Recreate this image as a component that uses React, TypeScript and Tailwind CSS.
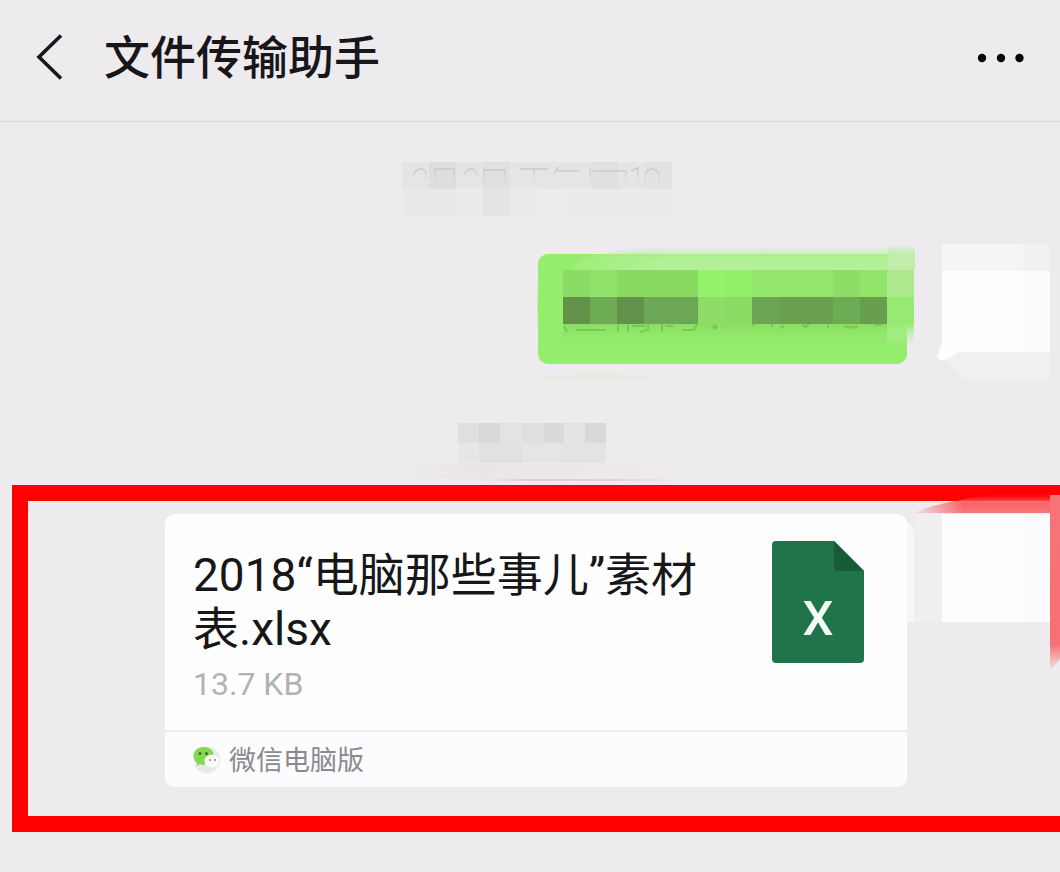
import type { ReactNode } from 'react'

type Block = [x: number, y: number, w: number, h: number, fill: string]

const DATE_BLOCKS: Block[] = [
  [0, 0, 270, 27, '#e5e4e6'],
  [27, 0, 27, 27, '#dedddf'],
  [81, 0, 27, 27, '#e0dfe1'],
  [189, 0, 27, 27, '#e0dfe1'],
  [243, 0, 27, 27, '#e2e1e3'],
  [0, 27, 54, 27, '#e9e8ea'],
  [54, 27, 27, 27, '#ebeaec'],
  [81, 27, 27, 27, '#e4e3e5'],
  [108, 27, 27, 27, '#eae9eb'],
  [162, 27, 108, 27, '#ebeaec'],
]

const TIME_BLOCKS: Block[] = [
  [58, 0, 21, 20, '#dfdfe1'],
  [79, 0, 21, 20, '#d9d9dc'],
  [100, 0, 22, 20, '#e3e3e5'],
  [122, 0, 22, 20, '#dfdfe1'],
  [144, 0, 20, 20, '#dadadd'],
  [164, 0, 21, 20, '#e4e4e6'],
  [185, 0, 21, 20, '#d9d9dc'],
  [58, 20, 21, 20, '#e6e6e8'],
  [79, 20, 43, 20, '#e1e1e3'],
  [122, 20, 42, 20, '#e5e5e7'],
  [164, 20, 42, 20, '#e3e3e5'],
]

const BUBBLE_BLOCKS: Block[] = [
  [39, 27, 27, 27, '#8bdc64'],
  [66, 27, 27, 27, '#8fe368'],
  [93, 27, 81, 27, '#89da61'],
  [174, 27, 27, 27, '#94f26b'],
  [201, 27, 27, 27, '#92ed69'],
  [228, 27, 81, 27, '#91e66b'],
  [309, 27, 27, 27, '#8cdf64'],
  [336, 27, 27, 27, '#90e569'],
  [363, 27, 27, 27, '#ade98c'],
  [39, 54, 27, 27, '#62914a'],
  [66, 54, 27, 27, '#6dab54'],
  [93, 54, 27, 27, '#61914a'],
  [120, 54, 54, 27, '#6ba755'],
  [174, 54, 27, 27, '#8ddd66'],
  [201, 54, 27, 27, '#8adb61'],
  [228, 54, 27, 27, '#6ba552'],
  [255, 54, 54, 27, '#68a04e'],
  [309, 54, 27, 27, '#6dab54'],
  [336, 54, 27, 27, '#689f4d'],
  [363, 54, 27, 27, '#96e972'],
]

function Blocks({ items }: { items: Block[] }) {
  return (
    <>
      {items.map(([x, y, w, h, fill]) => (
        <rect key={`${x}-${y}`} x={x} y={y} width={w} height={h} fill={fill} />
      ))}
    </>
  )
}

function BackIcon() {
  return (
    <svg width="28" height="48" viewBox="0 0 28 48" fill="none" stroke="#17161a" strokeWidth="3.6" aria-hidden="true">
      <path d="M25 1.500 3 23l22 21.500" />
    </svg>
  )
}

function MoreIcon() {
  return (
    <svg width="48" height="10" viewBox="0 0 48 10" fill="#050506" aria-hidden="true">
      <circle cx="6" cy="5" r="4.200" />
      <circle cx="25" cy="5" r="4.200" />
      <circle cx="43.500" cy="5" r="4.200" />
    </svg>
  )
}

function ExcelIcon() {
  return (
    <svg width="92" height="122" viewBox="0 0 92 122" className="shrink-0" role="img" aria-label="Excel">
      <path d="M4 0h58l30 30v88a4 4 0 0 1-4 4H4a4 4 0 0 1-4-4V4a4 4 0 0 1 4-4Z" fill="#20744a" />
      <path d="M62 0l30 30H66a4 4 0 0 1-4-4Z" fill="#185c37" />
      <text x="46" y="94" textAnchor="middle" fill="#f4fff8" className="font-['Roboto',sans-serif] text-[49px] font-medium">
        X
      </text>
    </svg>
  )
}

function WeChatIcon() {
  return (
    <svg width="28" height="28" viewBox="0 0 28 28" className="shrink-0" aria-hidden="true">
      <circle cx="14" cy="14" r="13.500" fill="#e9e9ea" />
      <path
        d="M10.500 1C4.500 1 .5 5 .5 10c0 3 1.500 5.500 3.800 7.200L3.500 20l3.600-1.700c1.600.5 3.600.7 5.400.3C12 12.500 16 9 21 9 20 4 16 1 10.500 1Z"
        fill="#84d94e"
      />
      <ellipse cx="19" cy="15" rx="7.500" ry="6.500" fill="#fafafa" />
      <path d="M21 20l3.500 2-.8-3.500Z" fill="#fafafa" />
      <circle cx="7" cy="7.500" r="1.500" fill="#35702a" />
      <circle cx="13.500" cy="7.500" r="1.500" fill="#35702a" />
      <circle cx="17" cy="14" r="1.100" fill="#8d938b" />
      <circle cx="22" cy="14" r="1.100" fill="#8d938b" />
    </svg>
  )
}

function HiddenDate() {
  return (
    <svg width="270" height="54" viewBox="0 0 270 54" role="img" aria-label="日期">
      <clipPath id="date-top">
        <rect width="270" height="26" />
      </clipPath>
      <linearGradient id="date-fade" x1="0" y1="5" x2="0" y2="20" gradientUnits="userSpaceOnUse">
        <stop offset="0" stopColor="#cccbce" />
        <stop offset="1" stopColor="#cccbce" stopOpacity=".1" />
      </linearGradient>
      <Blocks items={DATE_BLOCKS} />
      <g clipPath="url(#date-top)" stroke="url(#date-fade)" strokeWidth="2" fill="none">
        <path d="M11 14q2-7 8-7t5 10M33 24V7h19v17M62 14q2-7 7-7t6 6M82 24V8h21v16M118 7h28M132 7v14M156 5l-4 7M154 9h24M188 7v8M191 9h33v16M229 9l7-3v20M243 25v-9q0-9 7-9t7 9v9" />
      </g>
    </svg>
  )
}

function HiddenTime() {
  return (
    <svg width="280" height="58" viewBox="0 0 280 58" role="img" aria-label="时间">
      <defs>
        <linearGradient id="smear-x">
          <stop offset="0" stopColor="#ebe6e6" stopOpacity="0" />
          <stop offset=".25" stopColor="#ebe6e6" />
          <stop offset=".8" stopColor="#ece9ea" />
          <stop offset="1" stopColor="#ece9ea" stopOpacity="0" />
        </linearGradient>
        <linearGradient id="smear-pink">
          <stop offset="0" stopColor="#edc6ca" stopOpacity="0" />
          <stop offset=".25" stopColor="#edc6ca" />
          <stop offset=".7" stopColor="#edced5" />
          <stop offset="1" stopColor="#edced5" stopOpacity="0" />
        </linearGradient>
      </defs>
      <Blocks items={TIME_BLOCKS} />
      <rect x="8" y="41" width="254" height="15" fill="url(#smear-x)" />
      <rect x="78" y="56" width="200" height="2" fill="url(#smear-pink)" />
    </svg>
  )
}

// Message body is pixelated; drawing area is a little larger than the bubble itself.
function HiddenMessage() {
  return (
    <svg
      width="404"
      height="144"
      viewBox="0 0 404 144"
      className="absolute -top-[11px] -left-[14px]"
      role="img"
      aria-label="消息内容"
    >
      <defs>
        <linearGradient id="haze-top" x1="0" y1="0" x2="0" y2="1">
          <stop offset="0" stopColor="#b2f096" stopOpacity="0" />
          <stop offset=".5" stopColor="#b2f096" />
          <stop offset="1" stopColor="#b6ef9a" />
        </linearGradient>
        <linearGradient id="haze-left">
          <stop offset="0" stopColor="#fff" stopOpacity="0" />
          <stop offset=".35" stopColor="#fff" />
        </linearGradient>
        <linearGradient id="corner-fade" x1="0" y1="0" x2="0" y2="1">
          <stop offset="0" stopColor="#c3ecad" stopOpacity=".2" />
          <stop offset=".5" stopColor="#c3ecad" />
        </linearGradient>
        <linearGradient id="text-fade" x1="0" y1="0" x2="0" y2="1">
          <stop offset="0" stopColor="#82d45d" stopOpacity=".6" />
          <stop offset="1" stopColor="#92f069" stopOpacity="0" />
        </linearGradient>
        <linearGradient id="edge-fade" x1="0" y1="0" x2="0" y2="1">
          <stop offset="0" stopColor="#98eb75" />
          <stop offset="1" stopColor="#c7edb5" stopOpacity="0" />
        </linearGradient>
        <mask id="haze-mask">
          <rect width="404" height="144" fill="url(#haze-left)" />
        </mask>
      </defs>
      <g mask="url(#haze-mask)">
        <path d="M110 4h281v23H46l12-12Z" fill="url(#haze-top)" />
        <path d="M364 3h27v24h-27Z" fill="url(#corner-fade)" />
      </g>
      <path d="M15 25q-3 39 0 79Z" fill="#99ec73" />
      <Blocks items={BUBBLE_BLOCKS} />
      <path d="M39 81h324v27H39Z" fill="url(#text-fade)" />
      <path d="M363 81h27v22h-27Z" fill="url(#edge-fade)" />
      <g stroke="#64a84a" strokeWidth="2" fill="none" opacity=".45">
        <path d="M40 83l3 6M52 87h30M94 82v7M104 82v7M108 83h14M124 81v6l-8 2M138 81v8M141 83h8M158 87h12l3-6M228 83l3-2M248 81v3M260 83l-4 2M278 82l4 2 3-3M304 82v3M320 83q8 3 14 0M350 82h8" />
        <circle cx="191" cy="84" r="1.500" fill="#64a84a" />
      </g>
      <path d="M18 133q52-5 115 0l-28 5H20Z" fill="#e5ebdd" opacity=".6" />
    </svg>
  )
}

function HiddenAvatar() {
  return (
    <svg width="114" height="135" viewBox="0 0 114 135" className="-ml-[6px] shrink-0" role="img" aria-label="头像">
      <path d="M6 0h108v135H28L6 112Z" fill="#f1f0f3" />
      <path d="M6 0h81v27H6Z" fill="#f5f4f7" />
      <path d="M6 27h81v81H22q-18 14-21 4l5-12Z" fill="#fefefe" />
      <path d="M87 27h27v81H87Z" fill="#fcfbfe" />
    </svg>
  )
}

function RedSmear() {
  return (
    <svg width="150" height="188" viewBox="0 0 150 188" className="absolute -top-4 right-0" aria-hidden="true">
      <defs>
        <linearGradient id="smear-side" x1="0" y1="0" x2="0" y2="1">
          <stop offset="0" stopColor="#f77476" />
          <stop offset=".85" stopColor="#f77073" />
          <stop offset="1" stopColor="#f77073" stopOpacity="0" />
        </linearGradient>
        <linearGradient id="smear-top" x1="0" y1="8" x2="0" y2="28" gradientUnits="userSpaceOnUse">
          <stop offset="0" stopColor="#ff1215" stopOpacity="0" />
          <stop offset=".5" stopColor="#fa6467" />
          <stop offset="1" stopColor="#f4777a" />
        </linearGradient>
        <linearGradient id="smear-in">
          <stop offset="0" stopColor="#fff" stopOpacity="0" />
          <stop offset=".35" stopColor="#fff" />
        </linearGradient>
        <mask id="smear-mask">
          <rect width="150" height="188" fill="url(#smear-in)" />
        </mask>
      </defs>
      <g mask="url(#smear-mask)">
        <path d="M4 28Q30 16 90 9q32-3 60 0v19Z" fill="url(#smear-top)" />
      </g>
      <path d="M140 10h10v164l-10 12Z" fill="url(#smear-side)" />
    </svg>
  )
}

interface FileCardProps {
  name: string
  size: string
  source: string
  icon: ReactNode
}

function FileCard({ name, size, source, icon }: FileCardProps) {
  return (
    <a href="#file" className="block min-w-0 flex-1 overflow-hidden rounded-[10px] bg-[#fefefe]">
      <div className="flex h-[218px] items-start justify-between border-b-2 border-[#ececee] pt-[27px] pr-[43px] pl-7">
        <div className="min-w-0 max-w-[520px] pt-[7px]">
          <h2 className="text-[46px] leading-[54px] text-[#17171a]">{name}</h2>
          <p className="mt-1 text-[32px] leading-[48px] text-[#b2b2b2]">{size}</p>
        </div>
        {icon}
      </div>
      <div className="flex h-[55px] items-center gap-2 bg-[#fcfbfe] pl-7 text-[27px] text-[#8b8b8e]">
        <WeChatIcon />
        <span className="pt-1">{source}</span>
      </div>
    </a>
  )
}

export default function App() {
  return (
    <div
      lang="zh-CN"
      className="min-h-screen overflow-x-hidden bg-[#edebee] font-['Roboto','Noto_Sans_CJK_SC',sans-serif]"
    >
      <header className="flex h-[122px] items-center border-b border-[#d6d5d8] pr-9 pb-1.5 pl-9">
        <button type="button" aria-label="返回">
          <BackIcon />
        </button>
        <h1 className="ml-10 text-[46px] leading-[54px] font-medium text-[#17161a]">文件传输助手</h1>
        <button type="button" aria-label="更多" className="ml-auto">
          <MoreIcon />
        </button>
      </header>

      <main>
        <div className="flex justify-center pt-10 pl-[14px]">
          <HiddenDate />
        </div>

        <div className="mt-7 flex items-start justify-end pr-[10px]">
          <div className="relative mt-[10px] mr-[35px] h-[110px] w-[369px] rounded-[10px] bg-[#94ed6b]">
            <HiddenMessage />
          </div>
          <HiddenAvatar />
        </div>

        <div className="mt-11 flex justify-center pl-5">
          <HiddenTime />
        </div>

        <section className="relative mt-1 ml-3 flex items-start border-[16px] border-r-0 border-[#fe0000] pt-[13px] pr-[10px] pb-[29px] pl-[137px]">
          <FileCard name="2018“电脑那些事儿”素材表.xlsx" size="13.7 KB" source="微信电脑版" icon={<ExcelIcon />} />
          <svg width="35" height="108" viewBox="0 0 35 108" className="shrink-0" aria-hidden="true">
            <path d="M0 8q7 2 7 20v80H0Z" fill="#f7f6f8" />
            <path d="M7 0h28v108H7Z" fill="#efeef0" />
          </svg>
          <svg width="108" height="108" viewBox="0 0 108 108" className="shrink-0" role="img" aria-label="头像">
            <path d="M0 0h108v108H0Z" fill="#fefefe" />
            <path d="M82 0h26v108H82Z" fill="#fbfafd" />
          </svg>
          <RedSmear />
        </section>
      </main>
    </div>
  )
}
